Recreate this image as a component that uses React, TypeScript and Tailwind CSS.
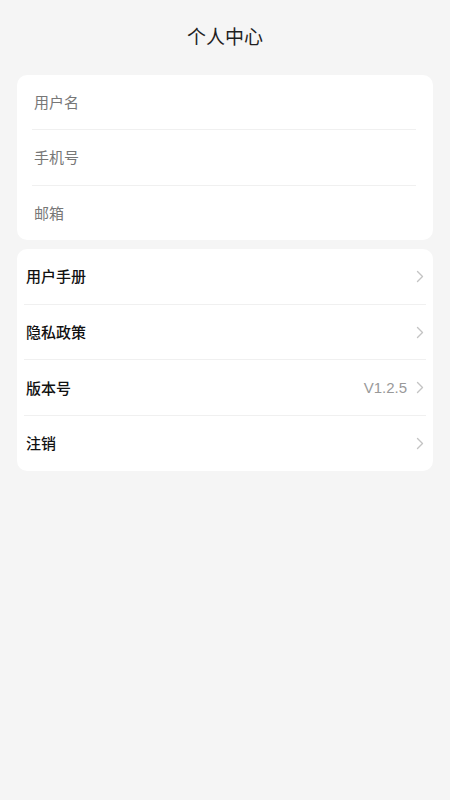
import React from "react";

const font = { fontFamily: '"Noto Sans CJK SC", "Noto Sans", sans-serif' };

function Chevron() {
  return (
    <svg width="8" height="13" viewBox="0 0 8 13" fill="none" className="shrink-0">
      <path d="M1.5 1.5 L6.5 6.5 L1.5 11.5" stroke="#c4c4c4" strokeWidth="1.4" strokeLinecap="round" strokeLinejoin="round" />
    </svg>
  );
}

const profileFields = ["用户名", "手机号", "邮箱"];

const menuItems = [
  { label: "用户手册" },
  { label: "隐私政策" },
  { label: "版本号", value: "V1.2.5" },
  { label: "注销" },
];

export default function App() {
  return (
    <div className="min-h-screen w-full bg-[#f5f5f5] px-[17px]" style={font}>
      <div className="flex h-[70px] items-center justify-center">
        <h1 className="text-[19px] leading-none text-[#1f1f1f]">个人中心</h1>
      </div>

      <div className="mt-[5px] rounded-[10px] bg-white">
        {profileFields.map((label, i) => (
          <div key={label}>
            <div className="flex h-[54.33px] items-center px-[17px]">
              <span className="text-[15px] text-[#777]">{label}</span>
            </div>
            {i < profileFields.length - 1 && (
              <div className="ml-[15px] mr-[17px] h-px bg-[#f0f0f0]" />
            )}
          </div>
        ))}
      </div>

      <div className="mt-[9px] rounded-[10px] bg-white">
        {menuItems.map((item, i) => (
          <div key={item.label}>
            <div className="flex h-[54.75px] items-center justify-between pl-[9px] pr-[9px]">
              <span className="text-[15px] font-medium text-[#111]">{item.label}</span>
              <div className="flex items-center gap-[9px]">
                {item.value && (
                  <span className="text-[15px] text-[#999]" style={{ fontFamily: '"Liberation Sans", "Noto Sans", sans-serif' }}>
                    {item.value}
                  </span>
                )}
                <Chevron />
              </div>
            </div>
            {i < menuItems.length - 1 && (
              <div className="mx-[7px] h-px bg-[#f0f0f0]" />
            )}
          </div>
        ))}
      </div>
    </div>
  );
}
